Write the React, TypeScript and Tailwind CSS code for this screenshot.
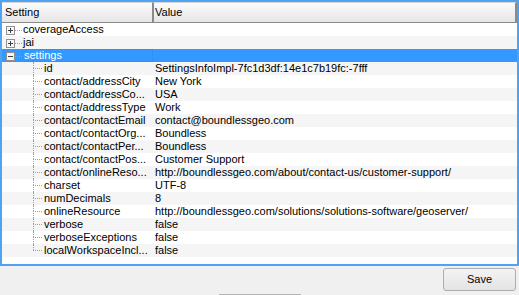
import React from "react";

type Row = {
  label: string;
  value?: string;
  level: number;
  expander?: "plus" | "minus";
  selected?: boolean;
};

const rows: Row[] = [
  { label: "coverageAccess", level: 0, expander: "plus" },
  { label: "jai", level: 0, expander: "plus" },
  { label: "settings", level: 0, expander: "minus", selected: true },
  { label: "id", value: "SettingsInfoImpl-7fc1d3df:14e1c7b19fc:-7fff", level: 1 },
  { label: "contact/addressCity", value: "New York", level: 1 },
  { label: "contact/addressCo...", value: "USA", level: 1 },
  { label: "contact/addressType", value: "Work", level: 1 },
  { label: "contact/contactEmail", value: "contact@boundlessgeo.com", level: 1 },
  { label: "contact/contactOrg...", value: "Boundless", level: 1 },
  { label: "contact/contactPer...", value: "Boundless", level: 1 },
  { label: "contact/contactPos...", value: "Customer Support", level: 1 },
  {
    label: "contact/onlineReso...",
    value: "http://boundlessgeo.com/about/contact-us/customer-support/",
    level: 1,
  },
  { label: "charset", value: "UTF-8", level: 1 },
  { label: "numDecimals", value: "8", level: 1 },
  {
    label: "onlineResource",
    value: "http://boundlessgeo.com/solutions/solutions-software/geoserver/",
    level: 1,
  },
  { label: "verbose", value: "false", level: 1 },
  { label: "verboseExceptions", value: "false", level: 1 },
  { label: "localWorkspaceIncl...", value: "false", level: 1 },
];

function ExpanderBox({ kind }: { kind: "plus" | "minus" }) {
  return (
    <svg width="9" height="9" viewBox="0 0 9 9" className="shrink-0">
      <rect x="0.5" y="0.5" width="8" height="8" fill="#f7f7f7" stroke="#919191" />
      <line x1="2" y1="4.5" x2="7" y2="4.5" stroke="#404040" />
      {kind === "plus" && <line x1="4.5" y1="2" x2="4.5" y2="7" stroke="#404040" />}
    </svg>
  );
}

function TopBranch({ kind }: { kind: "plus" | "minus" }) {
  return (
    <div className="flex h-full w-[20px] shrink-0 items-start pl-[4px] pt-[3px]">
      <ExpanderBox kind={kind} />
      <div className="mt-[4px] flex-1 border-t border-dotted border-[#a0a0a0]" />
    </div>
  );
}

function ChildBranch({ last }: { last: boolean }) {
  return (
    <div className="flex h-full w-[40px] shrink-0">
      <div className="w-[31px]" />
      <div className="flex flex-1 flex-col">
        <div className="h-[6px] border-l border-dotted border-[#a0a0a0]" />
        <div
          className={`flex-1 border-t border-dotted border-[#a0a0a0] ${
            last ? "" : "border-l"
          }`}
        />
      </div>
    </div>
  );
}

export default function App() {
  return (
    <div
      className="h-[295px] w-[519px] overflow-hidden bg-[#f0f0f0] text-[11px] text-black"
      style={{ fontFamily: '"Liberation Sans", Arial, sans-serif' }}
    >
      <div className="flex h-[266px] flex-col border-2 border-[#4ea3f4] bg-white">
        <div className="flex h-[21px] shrink-0">
          <div className="flex w-[151px] items-center border-b border-r border-t border-b-[#8a8a8a] border-r-[#8a8a8a] border-t-[#d8d8d8] bg-gradient-to-b from-[#fbfbfb] to-[#e6e6e6] pl-[3px]">
            Setting
          </div>
          <div className="flex flex-1 items-center border-b border-l border-r-2 border-t border-b-[#8a8a8a] border-l-[#8a8a8a] border-r-[#8a8a8a] border-t-[#d8d8d8] bg-gradient-to-b from-[#fbfbfb] to-[#e6e6e6] pl-[1px]">
            Value
          </div>
        </div>
        <div className="flex flex-col">
          {rows.map((r, i) => {
            const bg = r.selected ? "bg-[#3399ff] text-white" : i % 2 ? "bg-[#f5f5f5]" : "bg-white";
            return (
              <div key={i} className={`flex h-[13px] leading-[13px] ${bg}`}>
                <div className="flex h-full w-[151px] shrink-0">
                  {r.level === 0 ? (
                    <TopBranch kind={r.expander ?? "plus"} />
                  ) : (
                    <ChildBranch last={i === rows.length - 1} />
                  )}
                  <div
                    className={`flex h-full flex-1 items-center overflow-hidden whitespace-nowrap ${
                      r.level === 0 ? "pl-[1px]" : "pl-[2px]"
                    } ${r.selected ? "border border-dotted border-[#cc6600]" : ""}`}
                  >
                    {r.label}
                  </div>
                </div>
                <div className="flex-1 overflow-hidden whitespace-nowrap pl-[2px]">
                  {r.value}
                </div>
              </div>
            );
          })}
        </div>
      </div>
      <div className="mt-[2px] flex justify-end pr-[3px]">
        <button className="h-[23px] w-[73px] rounded-[3px] border border-[#adadad] bg-gradient-to-b from-[#f3f3f3] to-[#e4e4e4] text-[11px] text-black">
          Save
        </button>
      </div>
      <div className="ml-[219px] mt-[3px] h-px w-[82px] bg-[#b4b4b4]" />
    </div>
  );
}
